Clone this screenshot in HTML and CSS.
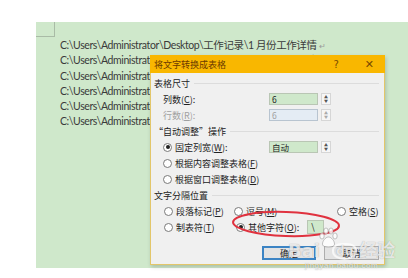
FILE: index.html
```html
<!DOCTYPE html>
<html lang="zh-CN">
<head>
<meta charset="utf-8">
<title>将文字转换成表格</title>
<link rel="stylesheet" href="styles.css">
</head>
<body>
<div class="page">
  <div class="corner"></div>
  <div class="lines">
    <p class="line">C:\Users\Administrator\Desktop\工作记录\1 月份工作详情 <span class="ret">↵</span></p>
    <p class="line">C:\Users\Administrator\Desktop\工作记录\2 月份工作详情</p>
    <p class="line">C:\Users\Administrator\Desktop\工作记录\3 月份工作详情</p>
    <p class="line">C:\Users\Administrator\Desktop\工作记录\4 月份工作详情</p>
    <p class="line">C:\Users\Administrator\Desktop\工作记录\5 月份工作详情</p>
    <p class="line">C:\Users\Administrator\Desktop\工作记录\6 月份工作详情</p>
  </div>

  <div class="dialog">
    <div class="titlebar">
      <span class="title">将文字转换成表格</span>
      <span class="tb-btn help">?</span>
      <span class="tb-btn close">✕</span>
    </div>
    <div class="body">
      <div class="row hdr"><span>表格尺寸</span><i class="rule"></i></div>
      <div class="row field">
        <span class="lbl">列数(<u>C</u>):</span>
        <span class="spin"><span class="box">6</span><span class="arrows"><b>▲</b><b>▼</b></span></span>
      </div>
      <div class="row field dis">
        <span class="lbl">行数(<u>R</u>):</span>
        <span class="spin"><span class="box">6</span><span class="arrows"><b>▲</b><b>▼</b></span></span>
      </div>
      <div class="row hdr"><span>“自动调整”操作</span><i class="rule"></i></div>
      <div class="row field">
        <span class="lbl"><span class="radio on"></span>固定列宽(<u>W</u>):</span>
        <span class="spin"><span class="box">自动</span><span class="arrows"><b>▲</b><b>▼</b></span></span>
      </div>
      <div class="row field"><span class="lbl"><span class="radio"></span>根据内容调整表格(<u>F</u>)</span></div>
      <div class="row field"><span class="lbl"><span class="radio"></span>根据窗口调整表格(<u>D</u>)</span></div>
      <div class="row hdr"><span>文字分隔位置</span><i class="rule"></i></div>
      <div class="row grid">
        <span class="opt"><span class="radio"></span>段落标记(<u>P</u>)</span>
        <span class="opt"><span class="radio"></span>逗号(<u>M</u>)</span>
        <span class="opt"><span class="radio"></span>空格(<u>S</u>)</span>
      </div>
      <div class="row grid">
        <span class="opt"><span class="radio"></span>制表符(<u>T</u>)</span>
        <span class="opt wide"><span class="radio on"></span>其他字符(<u>O</u>):<span class="other">\</span></span>
      </div>
      <div class="buttons">
        <span class="btn ok">确定</span>
        <span class="btn">取消</span>
      </div>
    </div>
  </div>

  <svg class="mark" width="112" height="32" viewBox="0 0 112 32"><ellipse cx="56" cy="16" rx="53" ry="12" fill="none" stroke="#e0323f" stroke-width="2" transform="rotate(2 56 16)"/></svg>

  <div class="watermark">
    <span class="wm-top">Bai<svg class="paw" width="20" height="22" viewBox="0 0 20 22"><g fill="rgba(255,255,255,0.8)" stroke="rgba(110,110,110,0.5)" stroke-width="0.8"><ellipse cx="4" cy="9" rx="2.2" ry="3"/><ellipse cx="8" cy="4" rx="2.2" ry="3"/><ellipse cx="13" cy="4" rx="2.2" ry="3"/><ellipse cx="17" cy="9" rx="2.2" ry="3"/><path d="M10.5 10c-3 0-6 4-6 7 0 2 2 3 6 3s6-1 6-3c0-3-3-7-6-7z"/></g></svg><span class="du">du</span>经验</span>
    <span class="wm-url">jingyan.baidu.com</span>
  </div>
</div>
</body>
</html>
```
FILE: styles.css
```css
* { box-sizing: border-box; }
html, body { margin: 0; padding: 0; }
body {
  width: 408px;
  height: 278px;
  background: #ffffff;
  overflow: hidden;
  font-family: "Lato", "Noto Sans CJK SC", sans-serif;
}
.page {
  position: relative;
  margin: 22px 0 0 36px;
  height: 246px;
  background: #cfe8cb;
}
.corner {
  width: 19px;
  height: 15px;
  border-right: 1px solid #a9bba6;
  border-bottom: 1px solid #a9bba6;
}
.lines { padding: 1px 0 0 24px; }
.line {
  margin: 0;
  height: 15.3px;
  line-height: 15.3px;
  font-size: 10.5px;
  letter-spacing: -0.4px;
  color: #3a3a3a;
  white-space: nowrap;
}
.ret { color: #9a9a9a; font-size: 8px; }

.dialog {
  position: absolute;
  left: 114px;
  top: 33px;
  width: 235px;
  height: 210px;
  background: #f0f0f0;
  border: 1px solid #e3c66a;
  box-shadow: 1px 2px 4px rgba(0,0,0,0.18);
  font-family: "Noto Sans CJK SC", sans-serif;
  font-size: 9px;
  color: #222;
}
.titlebar {
  display: flex;
  align-items: center;
  height: 18px;
  margin: -1px -1px 0 -1px;
  background: #f9b700;
  padding: 0 0 0 4px;
}
.title { flex: 1; color: #6b3a00; font-size: 9px; }
.tb-btn { color: #7a4a00; font-family: "DejaVu Sans", sans-serif; }
.help { font-size: 10px; margin-right: 26px; }
.close { font-size: 11px; margin-right: 11px; }

.body {
  display: flex;
  flex-direction: column;
  gap: 2px;
  padding: 3px 5px 0 3px;
}
.row {
  display: flex;
  align-items: center;
  height: 14px;
  white-space: nowrap;
}
.hdr span { margin-right: 4px; }
.hdr .rule { flex: 1; height: 1px; background: #dcdcdc; }
.field { padding-left: 9px; }
.lbl { display: flex; align-items: center; width: 106px; }
.dis .lbl { color: #a0a0a0; }
u { text-decoration: underline; text-underline-offset: 1px; }

.spin { display: flex; align-items: center; gap: 3px; }
.box {
  width: 49px;
  height: 12px;
  line-height: 10px;
  padding-left: 2px;
  border: 1px solid #b9c6b4;
  background: #cfe8cb;
  font-size: 8.5px;
}
.dis .box {
  background: #e4ecf4;
  border-color: #b8c4d0;
  color: #a0a0a0;
}
.arrows {
  display: flex;
  flex-direction: column;
  align-items: center;
  justify-content: center;
  width: 10px;
  height: 12px;
  border: 1px solid #d6d6d6;
  background: #f6f6f6;
}
.arrows b { font-size: 4px; line-height: 4px; color: #555; font-weight: normal; }
.dis .arrows b { color: #aaa; }

.radio {
  flex: none;
  width: 9px;
  height: 9px;
  margin-right: 3px;
  border: 1px solid #7a7a7a;
  border-radius: 50%;
  background: #fff;
  display: inline-flex;
  align-items: center;
  justify-content: center;
}
.radio.on::after {
  content: "";
  width: 4px;
  height: 4px;
  border-radius: 50%;
  background: #222;
}
.grid {
  display: grid;
  grid-template-columns: 70px 103px auto;
  padding-left: 10px;
}
.opt { display: flex; align-items: center; }
.opt.wide { grid-column: span 2; padding-left: 2px; }
.other {
  width: 17px;
  height: 14px;
  margin-left: 8px;
  border: 1px solid #b9c6b4;
  background: #cfe8cb;
  line-height: 12px;
  padding-left: 3px;
}
.buttons {
  display: flex;
  justify-content: flex-end;
  gap: 8px;
  margin-top: 10px;
}
.btn {
  width: 55px;
  height: 14px;
  display: flex;
  align-items: center;
  justify-content: center;
  background: #e3e3e3;
  border: 1px solid #adadad;
}
.btn.ok { width: 54px; border: 2px solid #3c84c4; }

.mark {
  position: absolute;
  left: 194px;
  top: 186px;
}
.watermark {
  position: absolute;
  left: 252px;
  top: 205px;
  display: flex;
  flex-direction: column;
  align-items: center;
  color: rgba(255,255,255,0.75);
  text-shadow: 0 0 1px rgba(90,90,90,0.55);
  pointer-events: none;
}
.wm-top {
  display: flex;
  align-items: flex-end;
  font-family: "DejaVu Sans", "Noto Sans CJK SC", sans-serif;
  font-size: 18px;
  font-weight: bold;
  line-height: 20px;
}
.paw { margin: 0 0 12px -2px; }
.du {
  font-size: 12px;
  border: 2px solid rgba(255,255,255,0.7);
  border-radius: 40% 40% 50% 50%;
  padding: 0 2px;
  margin: 0 2px 1px -6px;
  line-height: 13px;
}
.wm-url {
  font-family: "Liberation Sans", sans-serif;
  font-size: 8px;
  line-height: 9px;
  letter-spacing: 0.5px;
}
```
